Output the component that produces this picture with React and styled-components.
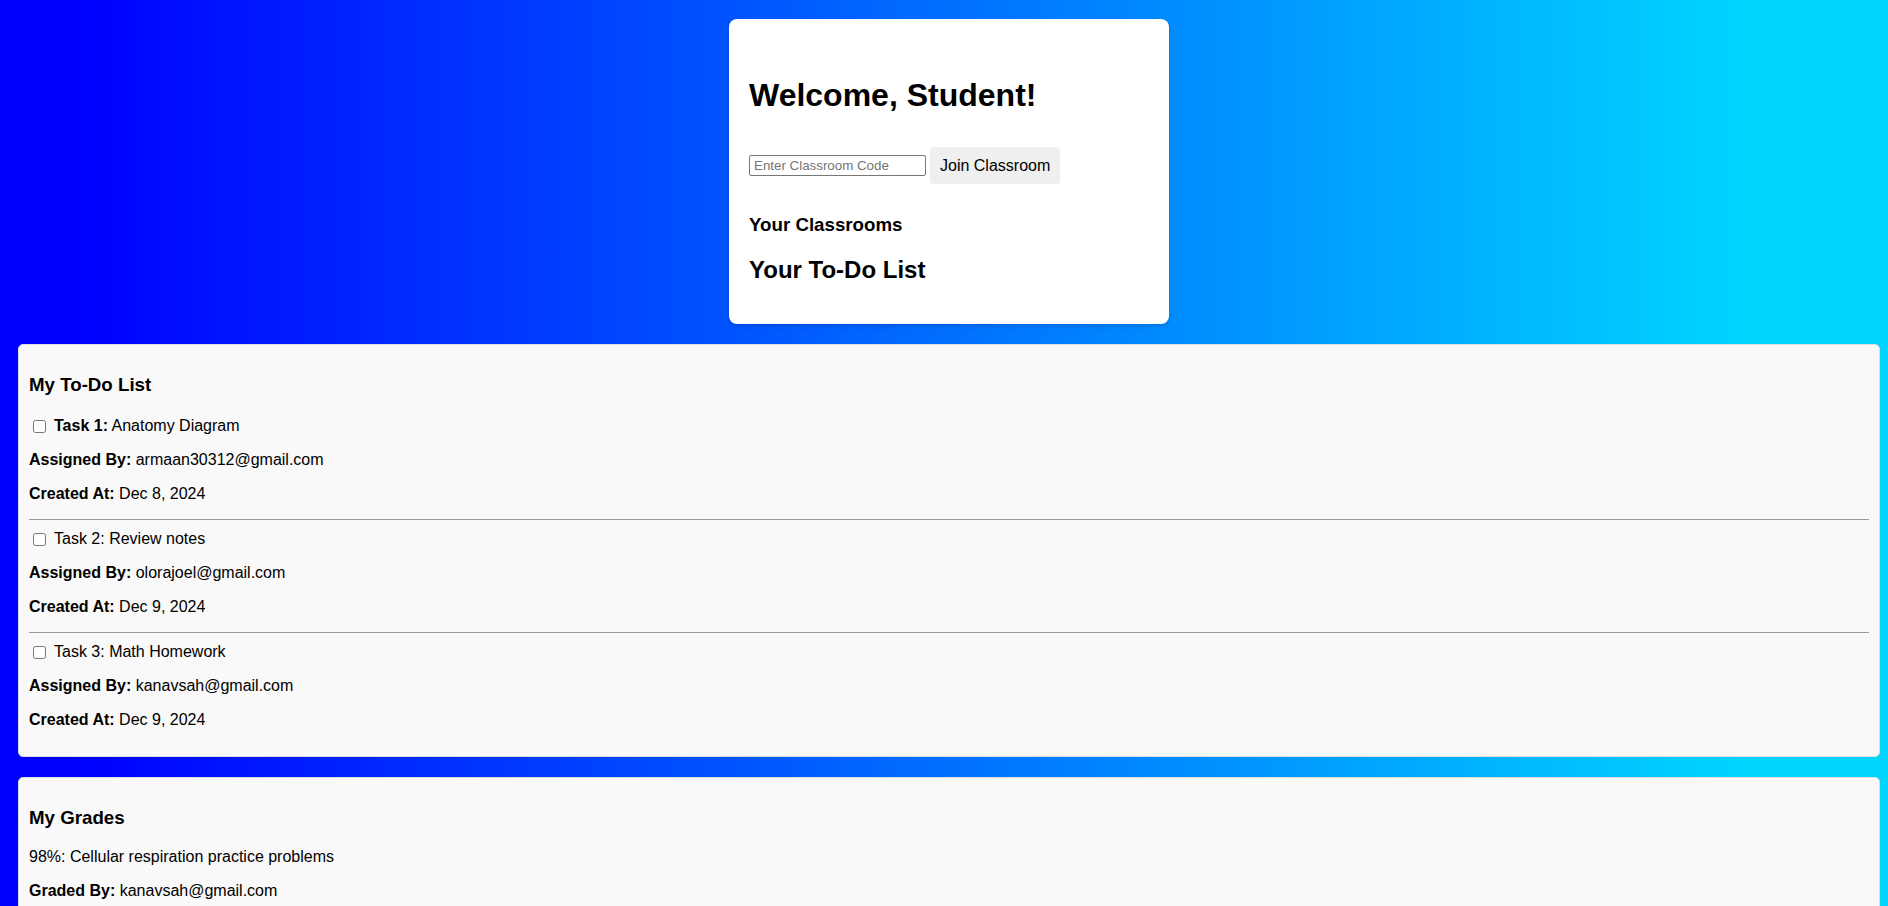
import React from 'react';
import styled, { createGlobalStyle } from 'styled-components';

const GlobalStyle = createGlobalStyle`
  html, body {
    margin: 0;
    padding: 0;
  }

  body {
    font-family: "Liberation Sans", Arial, sans-serif;
    color: black;
  }
`

const Page = styled.div`
  display: flex;
  flex-direction: column;
  gap: 20px;
  min-height: 100vh;
  padding: 19px 8px 20px 18px;
  box-sizing: border-box;
  background: linear-gradient(90deg, #0000ff 4%, #00d4ff 92%);
`

const WelcomeCard = styled.div`
  align-self: center;
  width: 440px;
  box-sizing: border-box;
  padding: 20px;
  background-color: white;
  border-radius: 8px;
  box-shadow: 0 2px 5px rgba(0, 0, 0, 0.15);
`

const Title = styled.h1`
  font-size: 32px;
  font-weight: bold;
  margin: 38px 0 33px;
`

const JoinRow = styled.div`
  display: flex;
  align-items: center;
  gap: 4px;
`

const CodeInput = styled.input`
  width: 177px;
  height: 21px;
  box-sizing: border-box;
  padding: 1px 4px;
  border: 1px solid #767676;
  border-radius: 2px;
  font-family: "Liberation Sans", Arial, sans-serif;
  font-size: 13.33px;

  &::placeholder {
    color: #757575;
  }
`

const JoinButton = styled.button`
  height: 37px;
  padding: 0 10px;
  border: none;
  border-radius: 4px;
  background-color: #efefef;
  font-family: "Liberation Sans", Arial, sans-serif;
  font-size: 16px;
  color: black;
  cursor: pointer;
`

const SubTitle = styled.h3`
  font-size: 18.72px;
  margin: 30px 0 0;
`

const ListTitle = styled.h2`
  font-size: 24px;
  margin: 20px 0;
`

const Panel = styled.section`
  background-color: #f9f9f9;
  border: 1px solid #ddd;
  border-radius: 5px;
  padding: 10px;
`

const PanelTitle = styled.h3`
  font-size: 18.72px;
  margin: 19px 0 11px;
`

const TaskItem = styled.div`
  display: flex;
  flex-direction: column;
  gap: 16px;
  padding: 10px 0 16px;
  border-bottom: 1px solid #999;

  &:last-child {
    border-bottom: none;
    padding-bottom: 17px;
  }
`

const GradeItem = styled.div`
  display: flex;
  flex-direction: column;
  gap: 16px;
  padding: 8px 0 16px;
`

const Line = styled.p`
  margin: 0;
  font-size: 16px;
`

const CheckLine = styled.label`
  display: flex;
  align-items: center;
  font-size: 16px;
  line-height: normal;

  input {
    width: 13px;
    height: 13px;
    margin: 0 8px 0 4px;
  }
`

const tasks = [
  { num: 1, title: 'Anatomy Diagram', by: 'armaan30312@gmail.com', at: 'Dec 8, 2024', bold: true },
  { num: 2, title: 'Review notes', by: 'olorajoel@gmail.com', at: 'Dec 9, 2024' },
  { num: 3, title: 'Math Homework', by: 'kanavsah@gmail.com', at: 'Dec 9, 2024' },
];

function Task({ task }) {
  return (
    <TaskItem>
      <CheckLine>
        <input type="checkbox" />
        <span>
          {task.bold
            ? <><strong>{`Task ${task.num}:`}</strong> {task.title}</>
            : `Task ${task.num}: ${task.title}`}
        </span>
      </CheckLine>
      <Line><strong>Assigned By:</strong> {task.by}</Line>
      <Line><strong>Created At:</strong> {task.at}</Line>
    </TaskItem>
  );
}

function App() {
  return (
    <>
      <GlobalStyle />
      <Page>
        <WelcomeCard>
          <Title>Welcome, Student!</Title>
          <JoinRow>
            <CodeInput type="text" placeholder="Enter Classroom Code" />
            <JoinButton type="button">Join Classroom</JoinButton>
          </JoinRow>
          <SubTitle>Your Classrooms</SubTitle>
          <ListTitle>Your To-Do List</ListTitle>
        </WelcomeCard>

        <Panel>
          <PanelTitle>My To-Do List</PanelTitle>
          {tasks.map(task => <Task key={task.num} task={task} />)}
        </Panel>

        <Panel>
          <PanelTitle>My Grades</PanelTitle>
          <GradeItem>
            <Line>98%: Cellular respiration practice problems</Line>
            <Line><strong>Graded By:</strong> kanavsah@gmail.com</Line>
          </GradeItem>
        </Panel>
      </Page>
    </>
  );
}

export default App;
